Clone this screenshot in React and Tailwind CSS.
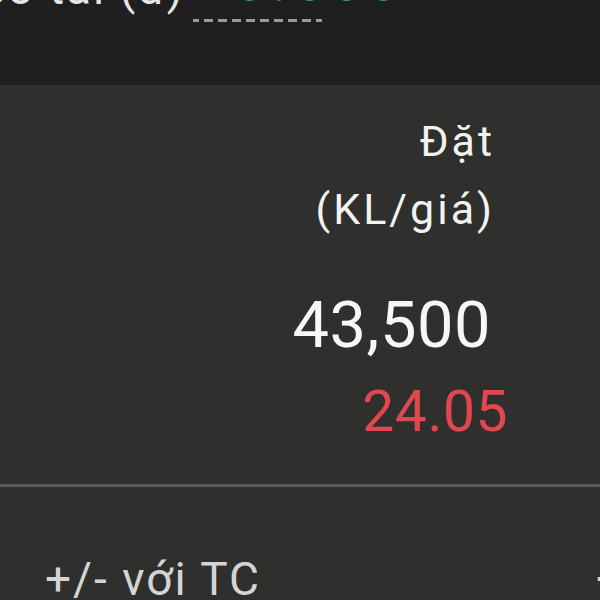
export default function App() {
  return (
    <div
      className="flex h-[600px] w-[600px] flex-col overflow-hidden bg-[#2f2f2d]"
      style={{ fontFamily: "Roboto, 'Noto Sans', sans-serif" }}
    >
      {/* top strip — the rest of the row above, cut off */}
      <div className="h-[85px] shrink-0 overflow-hidden bg-[#1f1f1f]">
        <div className="-mt-[35px] flex items-start">
          <span className="-ml-[22px] text-[46px] leading-[46px] tracking-[2px] text-[#e6e6e6]">
            Số tài (đ)
          </span>
          <div className="ml-[8px] flex flex-col items-start">
            <span className="-mt-[1px] pl-[44px] text-[44px] leading-[44px] tracking-[12px] text-[#2f9a6c]">
              0.000
            </span>
            <div className="mt-[11px] flex gap-[5px]">
              {[6, 9, 9, 9, 9, 9, 9, 9, 9, 6].map((w, i) => (
                <span key={i} className="h-[3px] bg-[#9a9a9a]" style={{ width: w }} />
              ))}
            </div>
          </div>
        </div>
      </div>

      {/* order column */}
      <div className="flex h-[399px] shrink-0 flex-col items-end pt-[22px]">
        <div className="flex flex-col items-end pr-[105px] text-[43px] leading-[68px] tracking-[3px] text-[#f2f2f2]">
          <span>Đặt</span>
          <span>(KL/giá)</span>
        </div>
        <div className="mt-[51px] pr-[109px] text-[65px] leading-[62px] tracking-[0.5px] text-[#f7f7f7]">
          43,500
        </div>
        <div className="mt-[28px] pr-[92px] text-[57px] leading-[56px] tracking-[0.5px] text-[#e2474f]">
          24.05
        </div>
      </div>

      <div className="h-[3px] shrink-0 bg-[#595957]" />

      <div className="flex items-start justify-between pt-[62px]">
        <span className="pl-[45px] text-[46px] leading-[60px] tracking-[2px] text-[#d4d4d4]">
          +/- với TC
        </span>
        <span className="-mr-[48px] text-[46px] leading-[60px] text-[#d4d4d4]">+0</span>
      </div>
    </div>
  );
}
